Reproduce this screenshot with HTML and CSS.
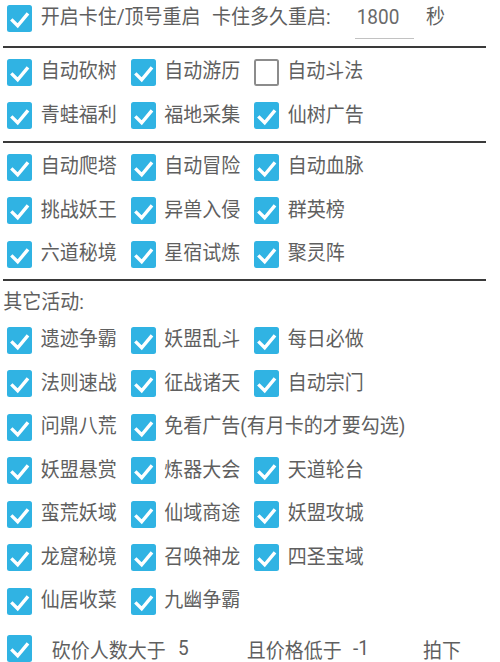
FILE: index.html
```html
<!DOCTYPE html>
<html lang="zh-CN">
<head>
<meta charset="utf-8">
<title>设置</title>
<link rel="stylesheet" href="styles.css">
</head>
<body>
<div class="page">
  <div class="row top">
    <span class="cb on"><svg viewBox="0 0 25 27"><polyline points="4.3,14.4 10.7,20.8 21,8.4"/></svg></span>
    <span class="tx t1">开启卡住/顶号重启</span>
    <span class="tx t2">卡住多久重启:</span>
    <span class="field"><span class="tx">1800</span></span>
    <span class="tx unit">秒</span>
  </div>
  <div class="divider d1"></div>

  <div class="sec s2">
    <div class="row">
      <span class="item"><span class="cb on"><svg viewBox="0 0 25 27"><polyline points="4.3,14.4 10.7,20.8 21,8.4"/></svg></span><span class="tx lbl">自动砍树</span></span>
      <span class="item"><span class="cb on"><svg viewBox="0 0 25 27"><polyline points="4.3,14.4 10.7,20.8 21,8.4"/></svg></span><span class="tx lbl">自动游历</span></span>
      <span class="item"><span class="cb off"></span><span class="tx lbl">自动斗法</span></span>
    </div>
    <div class="row">
      <span class="item"><span class="cb on"><svg viewBox="0 0 25 27"><polyline points="4.3,14.4 10.7,20.8 21,8.4"/></svg></span><span class="tx lbl">青蛙福利</span></span>
      <span class="item"><span class="cb on"><svg viewBox="0 0 25 27"><polyline points="4.3,14.4 10.7,20.8 21,8.4"/></svg></span><span class="tx lbl">福地采集</span></span>
      <span class="item"><span class="cb on"><svg viewBox="0 0 25 27"><polyline points="4.3,14.4 10.7,20.8 21,8.4"/></svg></span><span class="tx lbl">仙树广告</span></span>
    </div>
  </div>
  <div class="divider d2"></div>

  <div class="sec s3">
    <div class="row">
      <span class="item"><span class="cb on"><svg viewBox="0 0 25 27"><polyline points="4.3,14.4 10.7,20.8 21,8.4"/></svg></span><span class="tx lbl">自动爬塔</span></span>
      <span class="item"><span class="cb on"><svg viewBox="0 0 25 27"><polyline points="4.3,14.4 10.7,20.8 21,8.4"/></svg></span><span class="tx lbl">自动冒险</span></span>
      <span class="item"><span class="cb on"><svg viewBox="0 0 25 27"><polyline points="4.3,14.4 10.7,20.8 21,8.4"/></svg></span><span class="tx lbl">自动血脉</span></span>
    </div>
    <div class="row">
      <span class="item"><span class="cb on"><svg viewBox="0 0 25 27"><polyline points="4.3,14.4 10.7,20.8 21,8.4"/></svg></span><span class="tx lbl">挑战妖王</span></span>
      <span class="item"><span class="cb on"><svg viewBox="0 0 25 27"><polyline points="4.3,14.4 10.7,20.8 21,8.4"/></svg></span><span class="tx lbl">异兽入侵</span></span>
      <span class="item"><span class="cb on"><svg viewBox="0 0 25 27"><polyline points="4.3,14.4 10.7,20.8 21,8.4"/></svg></span><span class="tx lbl">群英榜</span></span>
    </div>
    <div class="row">
      <span class="item"><span class="cb on"><svg viewBox="0 0 25 27"><polyline points="4.3,14.4 10.7,20.8 21,8.4"/></svg></span><span class="tx lbl">六道秘境</span></span>
      <span class="item"><span class="cb on"><svg viewBox="0 0 25 27"><polyline points="4.3,14.4 10.7,20.8 21,8.4"/></svg></span><span class="tx lbl">星宿试炼</span></span>
      <span class="item"><span class="cb on"><svg viewBox="0 0 25 27"><polyline points="4.3,14.4 10.7,20.8 21,8.4"/></svg></span><span class="tx lbl">聚灵阵</span></span>
    </div>
  </div>
  <div class="divider d3"></div>

  <div class="title"><span class="tx">其它活动:</span></div>
  <div class="sec s4">
    <div class="row">
      <span class="item"><span class="cb on"><svg viewBox="0 0 25 27"><polyline points="4.3,14.4 10.7,20.8 21,8.4"/></svg></span><span class="tx lbl">遗迹争霸</span></span>
      <span class="item"><span class="cb on"><svg viewBox="0 0 25 27"><polyline points="4.3,14.4 10.7,20.8 21,8.4"/></svg></span><span class="tx lbl">妖盟乱斗</span></span>
      <span class="item"><span class="cb on"><svg viewBox="0 0 25 27"><polyline points="4.3,14.4 10.7,20.8 21,8.4"/></svg></span><span class="tx lbl">每日必做</span></span>
    </div>
    <div class="row">
      <span class="item"><span class="cb on"><svg viewBox="0 0 25 27"><polyline points="4.3,14.4 10.7,20.8 21,8.4"/></svg></span><span class="tx lbl">法则速战</span></span>
      <span class="item"><span class="cb on"><svg viewBox="0 0 25 27"><polyline points="4.3,14.4 10.7,20.8 21,8.4"/></svg></span><span class="tx lbl">征战诸天</span></span>
      <span class="item"><span class="cb on"><svg viewBox="0 0 25 27"><polyline points="4.3,14.4 10.7,20.8 21,8.4"/></svg></span><span class="tx lbl">自动宗门</span></span>
    </div>
    <div class="row">
      <span class="item"><span class="cb on"><svg viewBox="0 0 25 27"><polyline points="4.3,14.4 10.7,20.8 21,8.4"/></svg></span><span class="tx lbl">问鼎八荒</span></span>
      <span class="item wide"><span class="cb on"><svg viewBox="0 0 25 27"><polyline points="4.3,14.4 10.7,20.8 21,8.4"/></svg></span><span class="tx lbl">免看广告(有月卡的才要勾选)</span></span>
    </div>
    <div class="row">
      <span class="item"><span class="cb on"><svg viewBox="0 0 25 27"><polyline points="4.3,14.4 10.7,20.8 21,8.4"/></svg></span><span class="tx lbl">妖盟悬赏</span></span>
      <span class="item"><span class="cb on"><svg viewBox="0 0 25 27"><polyline points="4.3,14.4 10.7,20.8 21,8.4"/></svg></span><span class="tx lbl">炼器大会</span></span>
      <span class="item"><span class="cb on"><svg viewBox="0 0 25 27"><polyline points="4.3,14.4 10.7,20.8 21,8.4"/></svg></span><span class="tx lbl">天道轮台</span></span>
    </div>
    <div class="row">
      <span class="item"><span class="cb on"><svg viewBox="0 0 25 27"><polyline points="4.3,14.4 10.7,20.8 21,8.4"/></svg></span><span class="tx lbl">蛮荒妖域</span></span>
      <span class="item"><span class="cb on"><svg viewBox="0 0 25 27"><polyline points="4.3,14.4 10.7,20.8 21,8.4"/></svg></span><span class="tx lbl">仙域商途</span></span>
      <span class="item"><span class="cb on"><svg viewBox="0 0 25 27"><polyline points="4.3,14.4 10.7,20.8 21,8.4"/></svg></span><span class="tx lbl">妖盟攻城</span></span>
    </div>
    <div class="row">
      <span class="item"><span class="cb on"><svg viewBox="0 0 25 27"><polyline points="4.3,14.4 10.7,20.8 21,8.4"/></svg></span><span class="tx lbl">龙窟秘境</span></span>
      <span class="item"><span class="cb on"><svg viewBox="0 0 25 27"><polyline points="4.3,14.4 10.7,20.8 21,8.4"/></svg></span><span class="tx lbl">召唤神龙</span></span>
      <span class="item"><span class="cb on"><svg viewBox="0 0 25 27"><polyline points="4.3,14.4 10.7,20.8 21,8.4"/></svg></span><span class="tx lbl">四圣宝域</span></span>
    </div>
    <div class="row">
      <span class="item"><span class="cb on"><svg viewBox="0 0 25 27"><polyline points="4.3,14.4 10.7,20.8 21,8.4"/></svg></span><span class="tx lbl">仙居收菜</span></span>
      <span class="item"><span class="cb on"><svg viewBox="0 0 25 27"><polyline points="4.3,14.4 10.7,20.8 21,8.4"/></svg></span><span class="tx lbl">九幽争霸</span></span>
    </div>
  </div>

  <div class="row bottom">
    <span class="cb on"><svg viewBox="0 0 25 27"><polyline points="4.3,14.4 10.7,20.8 21,8.4"/></svg></span>
    <span class="tx b1">砍价人数大于</span>
    <span class="tx b2">5</span>
    <span class="tx b3">且价格低于</span>
    <span class="tx b4">-1</span>
    <span class="tx b5">拍下</span>
  </div>
</div>
</body>
</html>
```

FILE: styles.css
```css
html, body {
  margin: 0;
  padding: 0;
  background: #ffffff;
}

body {
  width: 500px;
  height: 662px;
  overflow: hidden;
  font-family: Roboto, "Noto Sans CJK SC", "Noto Sans", sans-serif;
  font-size: 19px;
  color: #5f5f5f;
}

.page {
  display: flex;
  flex-direction: column;
}

.tx {
  display: inline-block;
  transform: scaleY(1.07);
  transform-origin: center center;
}

.row {
  display: flex;
  align-items: center;
  height: 43.5px;
  padding-left: 7.3px;
  white-space: nowrap;
}

.item {
  flex: none;
  width: 123.5px;
  display: flex;
  align-items: center;
}

.item.wide {
  width: auto;
}

.cb {
  flex: none;
  box-sizing: border-box;
  width: 25px;
  height: 27px;
  border-radius: 2.5px;
  margin-right: 8.4px;
  display: block;
}

.cb.on {
  background: #30b3e3;
}

.cb.off {
  background: #ffffff;
  border: 2.5px solid #8c8c8c;
  width: 24.5px;
  height: 27px;
}

.cb svg {
  display: block;
  width: 25px;
  height: 27px;
}

.cb svg polyline {
  fill: none;
  stroke: #ffffff;
  stroke-width: 3.4;
  stroke-linejoin: miter;
  stroke-linecap: butt;
}

.lbl {
  line-height: 30px;
}

/* top row */
.row.top {
  height: 38px;
  align-items: flex-start;
}

.row.top .cb {
  margin-top: 4.5px;
}

.row.top .tx {
  line-height: 36px;
}

.t1 {
  width: 171.3px;
  flex: none;
}

.t2 {
  width: 143px;
  flex: none;
}

.field {
  flex: none;
  box-sizing: border-box;
  width: 59px;
  height: 38.5px;
  padding-left: 1.7px;
  border-bottom: 1.5px solid #c2c2c2;
  color: #6a6a6a;
}

.unit {
  margin-left: 12px;
}

/* dividers */
.divider {
  height: 2px;
  margin-left: 3px;
  margin-right: 14px;
  background: #3a3a3a;
  flex: none;
}

.d1 {
  margin-top: 8px;
}

.s2 {
  padding-top: 2.25px;
}

.d2 {
  margin-top: 3.5px;
}

.s3 {
  padding-top: 2.5px;
}

.d3 {
  margin-top: 3.25px;
}

.title {
  height: 37.25px;
  box-sizing: border-box;
  padding-top: 7px;
  padding-left: 3.3px;
  line-height: 30px;
}

/* bottom row */
.row.bottom {
  margin-top: 3.5px;
}

.row.bottom .cb {
  margin-right: 19.4px;
}

.b1 {
  flex: none;
  width: 126.3px;
}

.b2 {
  flex: none;
  width: 68.7px;
}

.b3 {
  flex: none;
  width: 106.3px;
}

.b4 {
  flex: none;
  width: 70px;
}
```
